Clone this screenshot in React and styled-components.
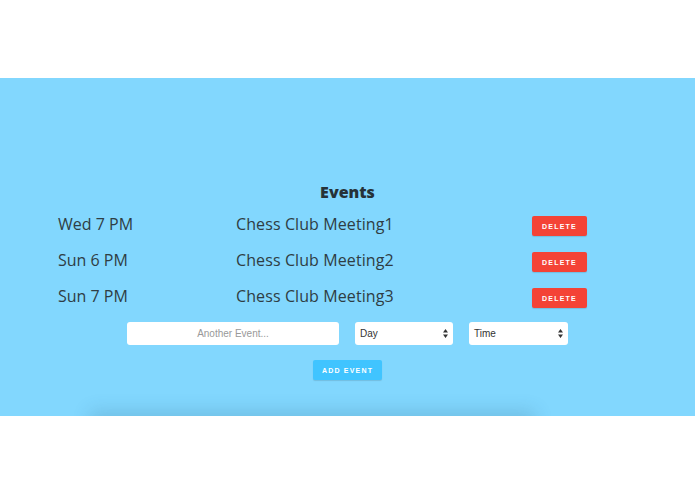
import React from 'react';
import styled, { createGlobalStyle } from 'styled-components';

const GlobalStyle = createGlobalStyle`
  html, body {
    margin: 0;
    padding: 0;
    background: #ffffff;
    font-family: "Open Sans", "Liberation Sans", sans-serif;
  }
`;

const Page = styled.div`
  padding-top: 78px;
  height: 494px;
  box-sizing: border-box;
`;

const Band = styled.section`
  position: relative;
  height: 338px;
  background: #82d7fe;
  overflow: hidden;
  padding-top: 104px;
  box-sizing: border-box;
  display: flex;
  flex-direction: column;
  align-items: center;
  &::after {
    content: '';
    position: absolute;
    left: 95px;
    right: 165px;
    bottom: -12px;
    height: 12px;
    box-shadow: 0 0 18px 5px rgba(40, 90, 120, 0.2);
  }
`;

const Title = styled.h2`
  margin: 0 0 4px;
  font-size: 16px;
  line-height: 20px;
  font-weight: 800;
  color: #263238;
`;

const List = styled.div`
  align-self: stretch;
  padding-left: 58px;
  display: flex;
  flex-direction: column;
`;

const Row = styled.div`
  display: flex;
  align-items: center;
  height: 36px;
  font-size: 16px;
  color: #2f3d44;
`;

const DayCell = styled.span`
  width: 178px;
`;

const NameCell = styled.span`
  width: 296px;
  letter-spacing: 0.1px;
`;

const Button = styled.button`
  border: none;
  border-radius: 2px;
  background: ${(p) => p.$color};
  color: #ffffff;
  font-family: "Liberation Sans", sans-serif;
  font-weight: 700;
  font-size: 7px;
  letter-spacing: 1.2px;
  padding: 0;
  height: 20px;
  width: ${(p) => p.$width}px;
  margin-top: ${(p) => p.$offset || 0}px;
  box-shadow: 0 1px 1px rgba(0, 0, 0, 0.12);
`;

const Form = styled.div`
  display: flex;
  gap: 16px;
  margin-top: 8px;
`;

const TextInput = styled.input`
  width: 212px;
  height: 23px;
  box-sizing: border-box;
  border: none;
  border-radius: 3px;
  background: #fff;
  text-align: center;
  font-family: "Liberation Sans", sans-serif;
  font-size: 10px;
  &::placeholder {
    color: #999;
  }
`;

const SelectBox = styled.div`
  position: relative;
  width: ${(p) => p.$width}px;
  height: 23px;
  box-sizing: border-box;
  border-radius: 3px;
  background: #fff;
  display: flex;
  align-items: center;
  padding-left: 5px;
  font-family: "Liberation Sans", sans-serif;
  font-size: 10px;
  color: #333;
`;

const Arrows = styled.svg`
  position: absolute;
  right: 5px;
  top: 7px;
`;

const AddWrap = styled.div`
  display: flex;
  margin-top: 15px;
`;

const Select = ({ label, width }) => (
  <SelectBox $width={width}>
    {label}
    <Arrows width="5" height="9" viewBox="0 0 5 9">
      <path d="M2.5 0 L5 3.5 L0 3.5 Z M2.5 9 L5 5.5 L0 5.5 Z" fill="#333" />
    </Arrows>
  </SelectBox>
);

const events = [
  { day: 'Wed 7 PM', name: 'Chess Club Meeting1' },
  { day: 'Sun 6 PM', name: 'Chess Club Meeting2' },
  { day: 'Sun 7 PM', name: 'Chess Club Meeting3' },
];

export default function App() {
  return (
    <Page>
      <GlobalStyle />
      <Band>
        <Title>Events</Title>
        <List>
          {events.map((e) => (
            <Row key={e.name}>
              <DayCell>{e.day}</DayCell>
              <NameCell>{e.name}</NameCell>
              <Button $color="#f44336" $width={55} $offset={4}>DELETE</Button>
            </Row>
          ))}
        </List>
        <Form>
          <TextInput placeholder="Another Event..." />
          <Select label="Day" width={98} />
          <Select label="Time" width={99} />
        </Form>
        <AddWrap>
          <Button $color="#40c4ff" $width={69}>ADD EVENT</Button>
        </AddWrap>
      </Band>
    </Page>
  );
}
